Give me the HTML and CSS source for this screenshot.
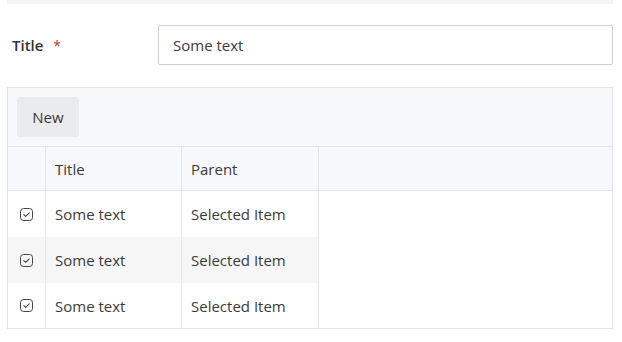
FILE: index.html
```html
<!DOCTYPE html>
<html>
<head>
<meta charset="utf-8">
<link rel="stylesheet" href="styles.css">
</head>
<body>
<div class="topbar"></div>
<div class="field">
  <label class="label">Title <span class="req">*</span></label>
  <div class="input">Some text</div>
</div>
<div class="panel">
  <div class="toolbar"><button class="btn">New</button></div>
  <div class="grid">
    <div class="hcell"></div>
    <div class="hcell">Title</div>
    <div class="hcell">Parent</div>
    <div class="hcell last"></div>

    <div class="row">
      <div class="cell chk"><svg width="13" height="13" viewBox="0 0 13 13"><rect x="0.5" y="0.5" width="12" height="12" rx="3" fill="none" stroke="#444" stroke-width="1"/><path d="M3.8 6.6 L5.7 8.4 L9.2 4.8" fill="none" stroke="#444" stroke-width="1.1" stroke-linecap="round" stroke-linejoin="round"/></svg></div>
      <div class="cell">Some text</div>
      <div class="cell">Selected Item</div>
    </div>
    <div class="row alt">
      <div class="cell chk"><svg width="13" height="13" viewBox="0 0 13 13"><rect x="0.5" y="0.5" width="12" height="12" rx="3" fill="none" stroke="#444" stroke-width="1"/><path d="M3.8 6.6 L5.7 8.4 L9.2 4.8" fill="none" stroke="#444" stroke-width="1.1" stroke-linecap="round" stroke-linejoin="round"/></svg></div>
      <div class="cell">Some text</div>
      <div class="cell">Selected Item</div>
    </div>
    <div class="row lastrow">
      <div class="cell chk"><svg width="13" height="13" viewBox="0 0 13 13"><rect x="0.5" y="0.5" width="12" height="12" rx="3" fill="none" stroke="#444" stroke-width="1"/><path d="M3.8 6.6 L5.7 8.4 L9.2 4.8" fill="none" stroke="#444" stroke-width="1.1" stroke-linecap="round" stroke-linejoin="round"/></svg></div>
      <div class="cell">Some text</div>
      <div class="cell">Selected Item</div>
    </div>
    <div class="filler"></div>
  </div>
</div>
</body>
</html>
```
FILE: styles.css
```css
* { box-sizing: border-box; }
body {
  margin: 0;
  font-family: "Open Sans", "Noto Sans", sans-serif;
  font-size: 15px;
  color: #3a3a3a;
  background: #fff;
}
.topbar {
  margin: 0 9px 0 7px;
  height: 4px;
  background: #f3f4f6;
}
.field {
  display: flex;
  align-items: center;
  margin-top: 21px;
  padding-left: 12px;
}
.label {
  width: 146px;
  font-weight: 600;
  color: #333;
}
.req {
  color: #c0392b;
  font-weight: 400;
  font-size: 14px;
  margin-left: 6px;
}
.input {
  width: 455px;
  height: 40px;
  border: 1px solid #cfcfcf;
  border-radius: 2px;
  padding-left: 14px;
  display: flex;
  align-items: center;
}
.panel {
  margin: 22px 9px 0 7px;
  border: 1px solid #e1e3e6;
}
.toolbar {
  background: #f7f8fa;
  height: 59px;
  padding: 9px 0 0 9px;
  border-bottom: 1px solid #e1e3e6;
}
.btn {
  font: inherit;
  color: #3a3a3a;
  background: #eaebed;
  border: none;
  border-radius: 3px;
  width: 62px;
  height: 40px;
  padding: 0;
}
.grid {
  display: grid;
  grid-template-columns: 38px 136px 137px 1fr;
  grid-template-rows: 44px 46px 46px 45px;
}
.hcell {
  background: #f7f8fa;
  border-right: 1px solid #e1e3e6;
  border-bottom: 1px solid #e1e3e6;
  display: flex;
  align-items: center;
  padding-left: 9px;
}
.hcell.last { border-right: none; }
.row {
  grid-column: 1 / 4;
  display: grid;
  grid-template-columns: 38px 136px 137px;
}
.row.alt { background: #f6f6f6; }
.cell {
  border-right: 1px solid #e1e3e6;
  display: flex;
  align-items: center;
  padding-left: 9px;
}
.cell.chk { padding-left: 12px; }
.filler {
  grid-column: 4;
  grid-row: 2 / 5;
}
```
